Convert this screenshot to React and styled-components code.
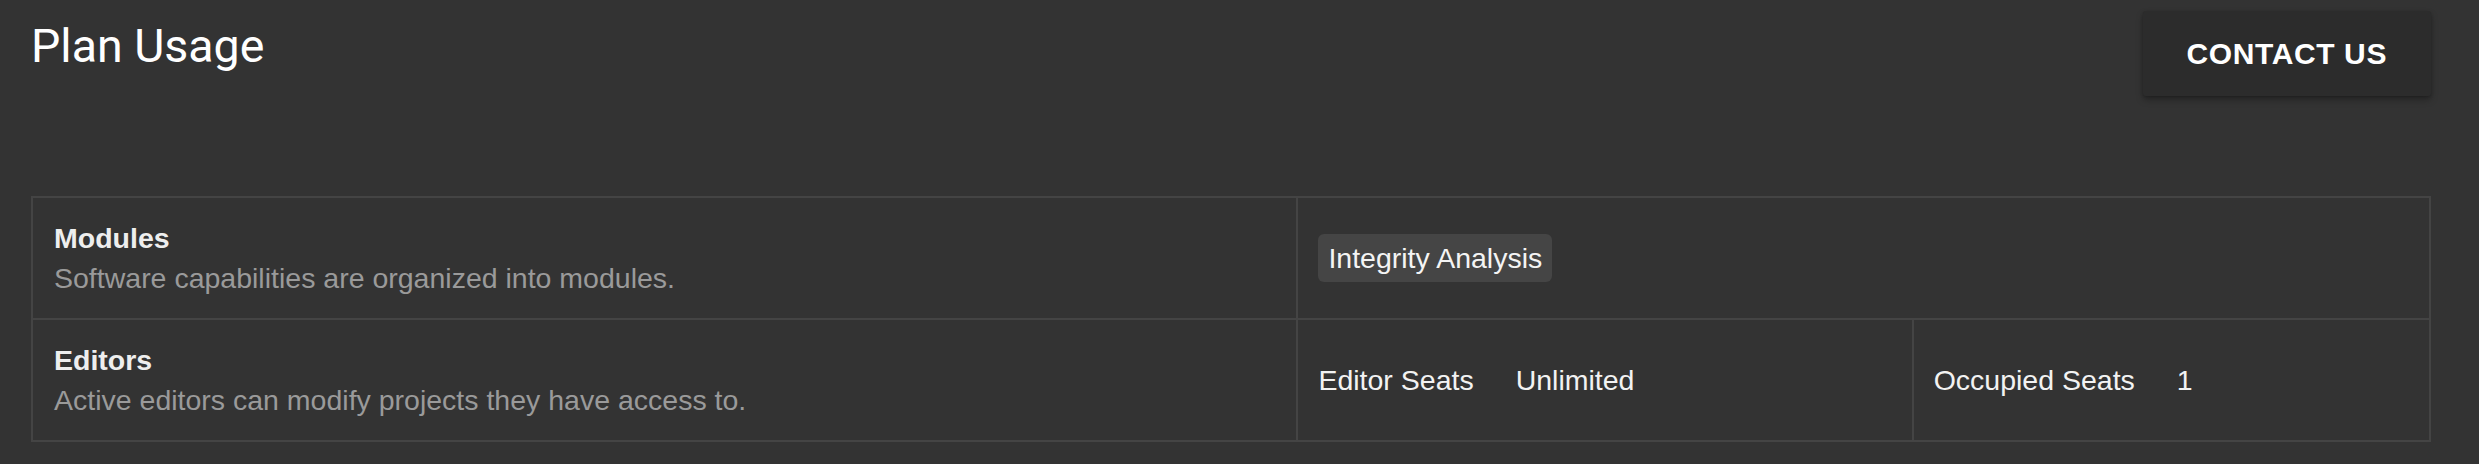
import React from 'react';
import styled, { createGlobalStyle } from 'styled-components';

const GlobalStyle = createGlobalStyle`
  html, body {
    margin: 0;
    padding: 0;
    background-color: #333333;
  }
  body {
    font-family: "Liberation Sans", Arial, sans-serif;
    color: #f2f2f2;
  }
`;

const Page = styled.div`
  padding: 11px 48px 0 31px;
`;

const Header = styled.div`
  display: flex;
  justify-content: space-between;
  align-items: flex-start;
`;

const Title = styled.h1`
  margin: 7px 0 0 0;
  font-family: Roboto, "Liberation Sans", sans-serif;
  font-weight: 400;
  font-size: 46.5px;
  line-height: 56px;
  color: #ffffff;
`;

const ContactButton = styled.button`
  height: 85px;
  padding: 0 44px;
  border: none;
  border-radius: 3px;
  background-color: #2c2c2c;
  color: #ffffff;
  font-family: "Liberation Sans", Arial, sans-serif;
  font-weight: 700;
  font-size: 30px;
  letter-spacing: 0.6px;
  text-transform: uppercase;
  cursor: pointer;
  box-shadow: 0 4px 7px rgba(0, 0, 0, 0.28), 0 1px 3px rgba(0, 0, 0, 0.2);
`;

const Table = styled.div`
  margin-top: 100px;
  display: grid;
  grid-template-columns: 1265fr 616fr 518fr;
  border: 2px solid #444444;
`;

const Cell = styled.div`
  display: flex;
  align-items: center;
  padding: 20px;
  grid-column: ${props => props.$span ? `span ${props.$span}` : 'auto'};
  border-top: ${props => props.$top ? '2px solid #444444' : 'none'};
  border-left: ${props => props.$left ? '2px solid #444444' : 'none'};
  font-size: 28.5px;
  line-height: 40px;
`;

const LabelCell = styled(Cell)`
  flex-direction: column;
  align-items: flex-start;
  padding-left: 21px;
`;

const Name = styled.div`
  font-weight: 700;
  color: #eeeeee;
`;

const Description = styled.div`
  color: #9a9a9a;
`;

const Chip = styled.span`
  display: inline-block;
  padding: 4px 10px;
  border-radius: 6px;
  background-color: #454545;
  color: #f4f4f4;
`;

const StatLabel = styled.span`
  margin-right: 42px;
  color: #f2f2f2;
`;

const StatValue = styled.span`
  color: #f2f2f2;
`;

const usage = [
  {
    name: 'Modules',
    description: 'Software capabilities are organized into modules.',
    modules: ['Integrity Analysis'],
  },
  {
    name: 'Editors',
    description: 'Active editors can modify projects they have access to.',
    stats: [
      { label: 'Editor Seats', value: 'Unlimited' },
      { label: 'Occupied Seats', value: '1' },
    ],
  },
];

export default function App() {
  return (
    <>
      <GlobalStyle />
      <Page>
        <Header>
          <Title>Plan Usage</Title>
          <ContactButton>Contact Us</ContactButton>
        </Header>
        <Table>
          {usage.map((row, i) => (
            <React.Fragment key={row.name}>
              <LabelCell $top={i > 0}>
                <Name>{row.name}</Name>
                <Description>{row.description}</Description>
              </LabelCell>
              {row.modules && (
                <Cell $top={i > 0} $left $span={2}>
                  {row.modules.map(m => <Chip key={m}>{m}</Chip>)}
                </Cell>
              )}
              {row.stats && row.stats.map(s => (
                <Cell key={s.label} $top={i > 0} $left>
                  <StatLabel>{s.label}</StatLabel>
                  <StatValue>{s.value}</StatValue>
                </Cell>
              ))}
            </React.Fragment>
          ))}
        </Table>
      </Page>
    </>
  );
}
